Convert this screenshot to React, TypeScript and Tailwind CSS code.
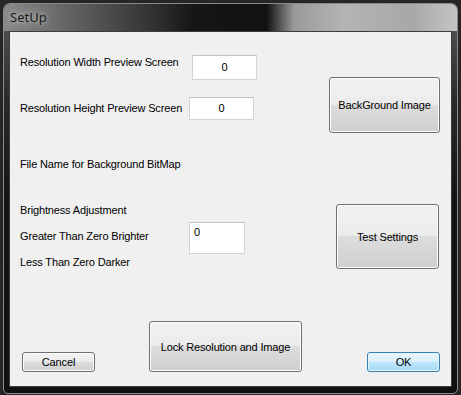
import React from "react"

const font = { fontFamily: '"Liberation Sans", Arial, sans-serif' }

function WinButton({
  label,
  className,
  primary = false,
}: {
  label: string
  className: string
  primary?: boolean
}) {
  const skin = primary
    ? "border-[#3c7fb1] bg-[linear-gradient(to_bottom,#eaf6fd_0%,#d9f0fc_50%,#bee6fd_50%,#a7d9f5_100%)] shadow-[inset_0_0_0_1px_#e6f6fd]"
    : "border-[#707070] bg-[linear-gradient(to_bottom,#f2f2f2_0%,#ebebeb_50%,#dddddd_50%,#cfcfcf_100%)] shadow-[inset_0_0_0_1px_#fcfcfc]"
  return (
    <button
      className={`flex shrink-0 items-center justify-center rounded-[3px] border pt-[1px] text-[11px] leading-[13px] tracking-[-0.15px] text-black ${skin} ${className}`}
    >
      {label}
    </button>
  )
}

function TextBox({
  value,
  className,
  multiline = false,
}: {
  value: string
  className: string
  multiline?: boolean
}) {
  return (
    <div
      className={`flex shrink-0 border border-[#d4d4d4] border-t-[#c2c2c2] bg-white text-[11px] leading-[13px] text-black ${
        multiline ? "items-start justify-start pl-[4px] pt-[3px]" : "items-center justify-center"
      } ${className}`}
    >
      {value}
    </div>
  )
}

function Label({ text, className = "" }: { text: string; className?: string }) {
  return (
    <div className={`text-[11px] leading-[13px] tracking-[-0.15px] text-black whitespace-nowrap ${className}`}>
      {text}
    </div>
  )
}

export default function App() {
  return (
    <div className="w-[461px] h-[395px] bg-[#262626] p-[3px] overflow-hidden" style={font}>
      <div className="flex h-[391px] w-[455px] flex-col rounded-t-[7px] rounded-b-[5px] border border-[#8a8a8a] bg-[linear-gradient(to_bottom,#5a5a5a,#2a2a2a_25%,#141414_50%,#101010)]">
        {/* title bar */}
        <div className="flex h-[27px] shrink-0 items-center rounded-t-[6px] bg-[linear-gradient(to_right,#8a8a8a_0%,#6a6a6a_12%,#3a3a3a_30%,#151515_42%,#121212_58%,#9a9a9a_64%,#b4b4b4_75%,#a8a8a8_90%,#c4c4c4_100%)] pl-[6px]">
          <span
            className="text-[13px] text-[#1a1a1a] [text-shadow:0_0_6px_rgba(255,255,255,0.8)]"
            style={{ fontFamily: '"Noto Sans", "Open Sans", sans-serif' }}
          >
            SetUp
          </span>
        </div>
        <div className="flex flex-1 px-[5px] pb-[5px]">
          {/* client area */}
          <div className="flex h-[356px] w-[443px] flex-col border border-[#3c3c3c] bg-[#f0f0f0]">
            <div className="flex h-[240px]">
              <div className="flex w-[319px] shrink-0 flex-col pl-[10px]">
                <div className="mt-[23px] flex">
                  <Label text="Resolution Width Preview Screen" className="w-[172px] pt-[1px]" />
                  <TextBox value="0" className="h-[25px] w-[65px]" />
                </div>
                <div className="mt-[17px] flex">
                  <Label text="Resolution Height Preview Screen" className="w-[169px] pt-[5px]" />
                  <TextBox value="0" className="h-[23px] w-[65px]" />
                </div>
                <Label text="File Name for Background BitMap" className="mt-[38px]" />
                <div className="mt-[33px] flex">
                  <div className="flex w-[169px] flex-col gap-[13px]">
                    <Label text="Brightness Adjustment" />
                    <Label text="Greater Than Zero Brighter" />
                    <Label text="Less Than Zero Darker" />
                  </div>
                  <TextBox value="0" multiline className="mt-[18px] h-[32px] w-[56px]" />
                </div>
              </div>
              <div className="flex flex-col">
                <WinButton label="BackGround Image" className="mt-[45px] h-[56px] w-[111px]" />
                <WinButton label="Test Settings" className="ml-[7px] mt-[71px] h-[65px] w-[103px]" />
              </div>
            </div>
            <div className="mt-[49px] flex items-end">
              <WinButton label="Cancel" className="ml-[12px] h-[20px] w-[73px]" />
              <WinButton label="Lock Resolution and Image" className="ml-[54px] h-[51px] w-[153px]" />
              <WinButton label="OK" primary className="ml-[65px] h-[20px] w-[73px]" />
            </div>
          </div>
        </div>
      </div>
    </div>
  )
}
